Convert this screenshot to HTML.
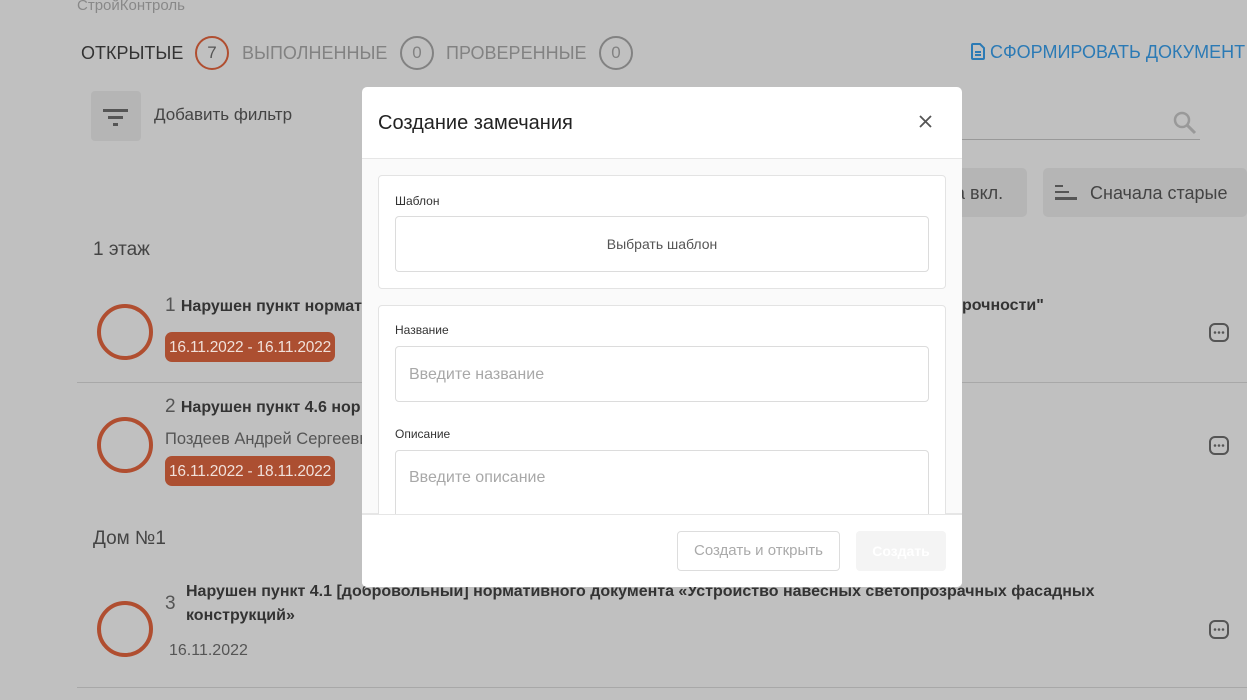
<!DOCTYPE html>
<html><head><meta charset="utf-8"><style>
*{box-sizing:border-box;margin:0;padding:0}
body{width:1247px;height:700px;overflow:hidden;background:#c0c0c0;font-family:"Liberation Sans",sans-serif;position:relative;color:#333}
.a{position:absolute;white-space:nowrap}
.circ{position:absolute;width:56px;height:56px;border:4px solid #b04e30;border-radius:50%}
.badge{position:absolute;background:#ac4f31;color:#f0e0da;border-radius:7px;font-size:15.5px;padding:7px 4px;height:30px;letter-spacing:-0.2px}
.dots{position:absolute}
.cnt{position:absolute;width:34px;height:34px;border:2px solid #828282;border-radius:50%;text-align:center;line-height:30px;font-size:17px;color:#828282}
.modal{position:absolute;left:362px;top:87px;width:600px;height:500px;background:#fff;border-radius:5px;overflow:hidden}
.card{position:absolute;left:16px;width:568px;border:1px solid #e3e3e3;border-radius:4px;background:#fff}
.inp{position:absolute;left:16px;width:534px;height:56px;border:1px solid #dcdcdc;border-radius:4px;font-size:16px;color:#a8a8a8;padding:19px 13px}
.lbl{position:absolute;left:16px;font-size:12px;color:#333}
</style></head><body>
<div class="a" style="left:77px;top:-3px;font-size:15px;color:#888">СтройКонтроль</div>
<div class="a" style="left:81px;top:43px;font-size:18px;color:#333">ОТКРЫТЫЕ</div>
<div class="cnt" style="left:195px;top:36px;border-color:#b04e30;color:#555">7</div>
<div class="a" style="left:242px;top:43px;font-size:18px;color:#828282">ВЫПОЛНЕННЫЕ</div>
<div class="cnt" style="left:400px;top:36px">0</div>
<div class="a" style="left:446px;top:43px;font-size:18px;color:#828282">ПРОВЕРЕННЫЕ</div>
<div class="cnt" style="left:599px;top:36px">0</div>
<div class="a" style="left:971px;top:42px;font-size:18px;color:#2b7ab5">
<svg width="14" height="17" viewBox="0 0 14 17" style="vertical-align:-2px"><path d="M2 1h7l4 4v10a1 1 0 0 1-1 1H2a1 1 0 0 1-1-1V2a1 1 0 0 1 1-1z M4 9h6 M4 12h6" fill="none" stroke="#2b7ab5" stroke-width="2"/></svg> СФОРМИРОВАТЬ ДОКУМЕНТ</div>
<div class="a" style="left:91px;top:91px;width:50px;height:50px;background:#b5b5b5;border-radius:4px"></div>
<div class="a" style="left:103px;top:109px;width:25px;height:3px;background:#555"></div>
<div class="a" style="left:108px;top:116px;width:15px;height:3px;background:#555"></div>
<div class="a" style="left:113px;top:123px;width:5px;height:3px;background:#555"></div>
<div class="a" style="left:154px;top:105px;font-size:17px;color:#444">Добавить фильтр</div>
<div class="a" style="left:962px;top:139px;width:238px;height:1px;background:#999"></div>
<svg class="a" style="left:1172px;top:110px" width="26" height="26"><circle cx="10" cy="10" r="7" fill="none" stroke="#999" stroke-width="2.5"/><path d="M15 15l8 8" stroke="#999" stroke-width="3"/></svg>
<div class="a" style="left:930px;top:168px;width:97px;height:49px;background:#b5b5b5;border-radius:5px"></div>
<div class="a" style="left:955px;top:183px;font-size:18px;color:#444">а вкл.</div>
<div class="a" style="left:1043px;top:168px;width:204px;height:49px;background:#b5b5b5;border-radius:5px"></div>
<div class="a" style="left:1055px;top:185px;width:8px;height:2px;background:#555"></div>
<div class="a" style="left:1055px;top:191px;width:14px;height:2px;background:#555"></div>
<div class="a" style="left:1055px;top:197px;width:22px;height:3px;background:#555"></div>
<div class="a" style="left:1090px;top:183px;font-size:18px;color:#444">Сначала старые</div>
<div class="a" style="left:93px;top:239px;font-size:19px;color:#444">1 этаж</div>
<div class="circ" style="left:97px;top:304px"></div>
<div class="a" style="left:165px;top:295px;font-size:19px;color:#555">1 <b style="font-size:16px;color:#333">Нарушен пункт нормат</b></div>
<div class="a" style="left:962px;top:297px;font-size:16px;font-weight:bold;color:#333">рочности"</div>
<div class="badge" style="left:165px;top:332px">16.11.2022 - 16.11.2022</div>
<svg class="dots" style="left:1209px;top:323px" width="20" height="19"><rect x="1" y="1" width="18" height="17" rx="5" fill="none" stroke="#555" stroke-width="2"/><circle cx="6" cy="9.5" r="1.3" fill="#555"/><circle cx="10" cy="9.5" r="1.3" fill="#555"/><circle cx="14" cy="9.5" r="1.3" fill="#555"/></svg>
<div class="a" style="left:77px;top:382px;width:1170px;height:1px;background:#a8a8a8"></div>
<div class="circ" style="left:97px;top:417px"></div>
<div class="a" style="left:165px;top:396px;font-size:19px;color:#555">2 <b style="font-size:16px;color:#333">Нарушен пункт 4.6 нор</b></div>
<div class="a" style="left:165px;top:430px;font-size:16.5px;color:#555">Поздеев Андрей Сергеевич</div>
<div class="badge" style="left:165px;top:456px">16.11.2022 - 18.11.2022</div>
<svg class="dots" style="left:1209px;top:436px" width="20" height="19"><rect x="1" y="1" width="18" height="17" rx="5" fill="none" stroke="#555" stroke-width="2"/><circle cx="6" cy="9.5" r="1.3" fill="#555"/><circle cx="10" cy="9.5" r="1.3" fill="#555"/><circle cx="14" cy="9.5" r="1.3" fill="#555"/></svg>
<div class="a" style="left:93px;top:528px;font-size:19px;color:#444">Дом №1</div>
<div class="circ" style="left:97px;top:601px"></div>
<div class="a" style="left:165px;top:593px;font-size:19px;color:#555">3</div>
<div class="a" style="left:186px;top:580px;font-size:16px;font-weight:bold;color:#333;line-height:24px">Нарушен пункт 4.1 [добровольный] нормативного документа «Устройство навесных светопрозрачных фасадных<br>конструкций»</div>
<div class="a" style="left:169px;top:642px;font-size:16px;color:#555">16.11.2022</div>
<svg class="dots" style="left:1209px;top:620px" width="20" height="19"><rect x="1" y="1" width="18" height="17" rx="5" fill="none" stroke="#555" stroke-width="2"/><circle cx="6" cy="9.5" r="1.3" fill="#555"/><circle cx="10" cy="9.5" r="1.3" fill="#555"/><circle cx="14" cy="9.5" r="1.3" fill="#555"/></svg>
<div class="a" style="left:77px;top:687px;width:1170px;height:1px;background:#a8a8a8"></div>

<div class="modal">
<div class="a" style="left:16px;top:25px;font-size:20px;color:#222">Создание замечания</div>
<svg class="a" style="left:557px;top:28px" width="13" height="13"><path d="M1 1l11 11M12 1L1 12" stroke="#555" stroke-width="1.8"/></svg>
<div class="a" style="left:0;top:71px;width:600px;height:356px;background:#fafafa;border-top:1px solid #e6e6e6;border-bottom:1px solid #e6e6e6"></div>
<div class="card" style="top:88px;height:114px">
<div class="lbl" style="top:18px">Шаблон</div>
<div class="inp" style="top:40px;text-align:center;font-size:14px;color:#555;padding-top:19px">Выбрать шаблон</div>
</div>
<div class="card" style="top:218px;height:240px">
<div class="lbl" style="top:17px">Название</div>
<div class="inp" style="top:40px">Введите название</div>
<div class="lbl" style="top:121px">Описание</div>
<div class="inp" style="top:144px;height:100px;padding-top:18px">Введите описание</div>
</div>
<div class="a" style="left:0;top:427px;width:600px;height:73px;background:#fff;border-top:1px solid #e6e6e6"></div>
<div class="a" style="left:315px;top:444px;width:163px;height:40px;border:1px solid #ddd;border-radius:4px;font-size:15px;color:#aaa;text-align:center;line-height:38px">Создать и открыть</div>
<div class="a" style="left:494px;top:444px;width:90px;height:40px;background:#f4f4f4;border-radius:4px;font-size:14px;color:#fff;text-align:center;line-height:40px;font-weight:bold">Создать</div>
</div>
</body></html>
